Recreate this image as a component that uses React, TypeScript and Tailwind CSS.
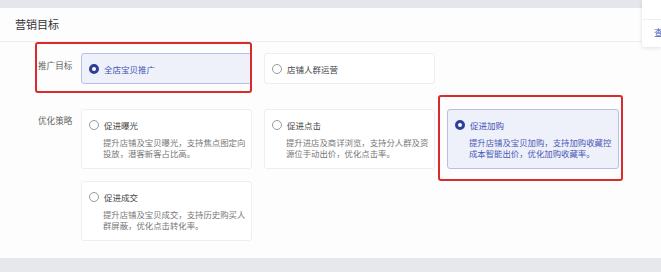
import React from "react";

const font = { fontFamily: '"Noto Sans CJK SC", "Noto Sans", sans-serif' };

function Radio({ on }: { on?: boolean }) {
  return on ? (
    <span className="w-[10px] h-[10px] rounded-full border-[3px] border-[#2e3e9d] bg-white shrink-0" />
  ) : (
    <span className="w-[10px] h-[10px] rounded-full border border-[#9a9a9a] bg-white shrink-0" />
  );
}

function SmallCard({ title, on }: { title: string; on?: boolean }) {
  return (
    <div
      className={
        "w-[171px] h-[31px] rounded-[3px] border flex items-center pl-[7px] gap-[5px] " +
        (on ? "bg-[#eef0fa] border-[#b7bfe6]" : "bg-white border-[#eceef2]")
      }
    >
      <Radio on={on} />
      <span className={"text-[8.5px] leading-[12px] " + (on ? "text-[#4553b3]" : "text-[#444]")}>{title}</span>
    </div>
  );
}

function Card({ title, lines, on }: { title: string; lines: string[]; on?: boolean }) {
  return (
    <div
      className={
        "h-[60px] rounded-[3px] border pl-[7px] pt-[9px] " +
        (on ? "bg-[#eef0fa] border-[#b7bfe6]" : "bg-white border-[#eceef2]")
      }
    >
      <div className="flex items-center gap-[5px]">
        <Radio on={on} />
        <span className={"text-[8.5px] leading-[12px] " + (on ? "text-[#4553b3]" : "text-[#444]")}>{title}</span>
      </div>
      <div className={"pl-[14px] mt-[6px] text-[8.4px] leading-[10.7px] " + (on ? "text-[#4a58b8]" : "text-[#777]")}>
        {lines.map((l) => (
          <div key={l}>{l}</div>
        ))}
      </div>
    </div>
  );
}

export default function App() {
  return (
    <div className="relative w-[661px] h-[272px] bg-[#e6e8ec] overflow-hidden" style={font}>
      <div className="h-[8px] bg-[#e4e6eb]" />
      <div className="h-[250px] bg-[#fdfdfd] flex flex-col">
        <div className="h-[34px] border-b border-[#eeeff2] flex items-center pl-[15px] text-[11px] text-[#333]">
          营销目标
        </div>
        <div className="pt-[11px] pl-[38px] flex flex-col gap-[25px]">
          <div className="flex">
            <div className="w-[43px] pt-[6px] text-[8.6px] leading-[12px] text-[#666]">推广目标</div>
            <div className="flex gap-[12px]">
              <SmallCard title="全店宝贝推广" on />
              <SmallCard title="店铺人群运营" />
            </div>
          </div>
          <div className="flex">
            <div className="w-[43px] pt-[5px] text-[8.6px] leading-[12px] text-[#666]">优化策略</div>
            <div className="grid grid-cols-[171px_171px_172px] gap-x-[12px] gap-y-[12px]">
              <Card title="促进曝光" lines={["提升店铺及宝贝曝光，支持焦点图定向", "投放，潜客新客占比高。"]} />
              <Card title="促进点击" lines={["提升进店及商详浏览，支持分人群及资", "源位手动出价，优化点击率。"]} />
              <Card title="促进加购" on lines={["提升店铺及宝贝加购，支持加购收藏控", "成本智能出价，优化加购收藏率。"]} />
              <Card title="促进成交" lines={["提升店铺及宝贝成交，支持历史购买人", "群屏蔽，优化点击转化率。"]} />
            </div>
          </div>
        </div>
      </div>

      <div className="absolute left-[35px] top-[42px] w-[217px] h-[51px] border-2 border-[#d92b2b] rounded-[3px]" />
      <div className="absolute left-[438px] top-[95px] w-[185px] h-[86px] border-2 border-[#d92b2b] rounded-[3px]" />

      <div className="absolute right-0 top-0 w-[19px] h-[47px] bg-white rounded-bl-[3px] shadow-[0_1px_4px_rgba(0,0,0,0.12)] flex flex-col">
        <div className="h-[20px] border-b border-[#eeeff2]" />
        <div className="pl-[12px] pt-[7px] text-[9px] leading-[12px] text-[#4a5fc1] whitespace-nowrap">查</div>
      </div>
    </div>
  );
}
